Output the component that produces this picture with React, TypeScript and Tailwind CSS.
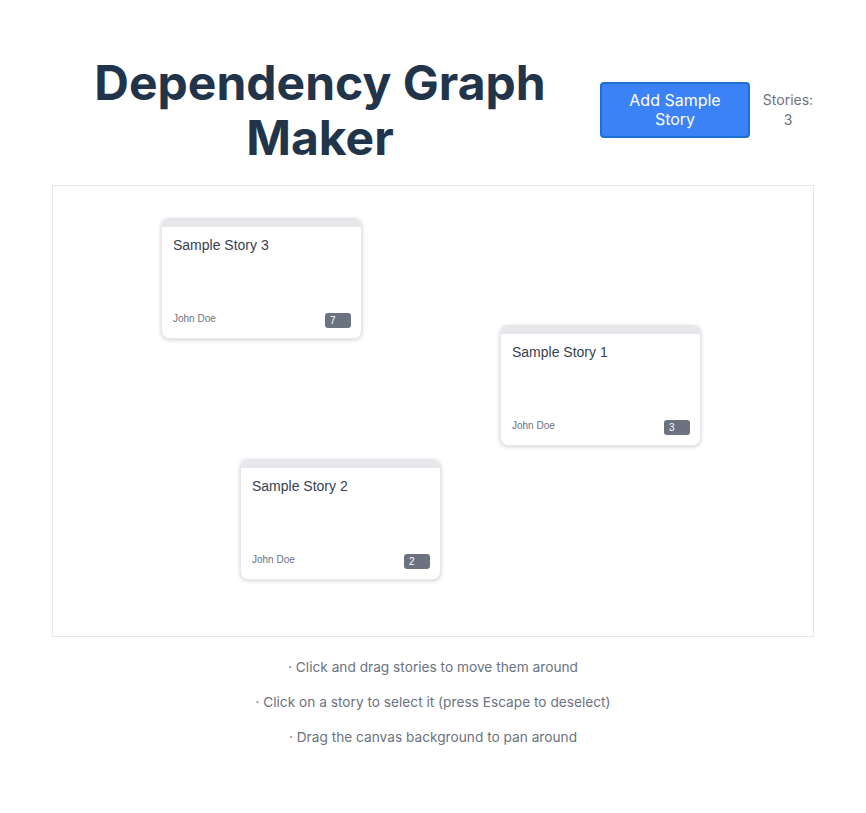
import React from "react";

type Story = { id: number; title: string; author: string; points: number; x: number; y: number };

const stories: Story[] = [
  { id: 3, title: "Sample Story 3", author: "John Doe", points: 7, x: 108, y: 32 },
  { id: 1, title: "Sample Story 1", author: "John Doe", points: 3, x: 447, y: 139 },
  { id: 2, title: "Sample Story 2", author: "John Doe", points: 2, x: 187, y: 273 },
];

function Card({ s }: { s: Story }) {
  return (
    <div
      className="absolute w-[201px] h-[121px] bg-white rounded-lg border border-[#e5e7eb] shadow-[0_1px_4px_rgba(0,0,0,0.18)] overflow-hidden flex flex-col"
      style={{ left: s.x, top: s.y, fontFamily: '"Liberation Sans", Arial, sans-serif' }}
    >
      <div className="h-[8px] bg-[#e5e7eb]" />
      <div className="flex-1 flex flex-col pl-[11px] pr-[10px] pt-[9px] pb-[10px]">
        <div className="text-[14px] leading-[18px] text-[#374151]">{s.title}</div>
        <div className="mt-auto flex items-start justify-between">
          <span className="text-[10px] leading-[12px] text-[#6b7280]">{s.author}</span>
          <span className="w-[26px] h-[15px] rounded-[3px] bg-[#6b7280] text-white text-[10px] leading-[15px] pl-[5px]">
            {s.points}
          </span>
        </div>
      </div>
    </div>
  );
}

export default function App() {
  return (
    <div className="min-h-screen bg-white px-[52px] pt-[55px]" style={{ fontFamily: "Inter, sans-serif" }}>
      <div className="flex items-center gap-3">
        <h1 className="flex-1 text-center text-[48px] leading-[55px] font-bold text-[#22344a]">
          Dependency Graph Maker
        </h1>
        <button className="w-[150px] shrink-0 rounded-[4px] border-2 border-[#1d6fd8] bg-[#3b82f6] py-[7px] text-[16px] leading-[19px] text-white">
          Add Sample
          <br />
          Story
        </button>
        <div className="w-[52px] shrink-0 text-center text-[14px] leading-[20px] text-[#6b7280]">
          Stories:
          <br />3
        </div>
      </div>
      <div className="relative mt-5 h-[452px] border border-[#e5e7eb] bg-white overflow-hidden">
        {stories.map((s) => (
          <Card key={s.id} s={s} />
        ))}
      </div>
      <div className="mt-5 flex flex-col items-center gap-[15px] text-[13.7px] leading-[20px] text-[#6b7280]">
        <p>· Click and drag stories to move them around</p>
        <p>· Click on a story to select it (press Escape to deselect)</p>
        <p>· Drag the canvas background to pan around</p>
      </div>
    </div>
  );
}
